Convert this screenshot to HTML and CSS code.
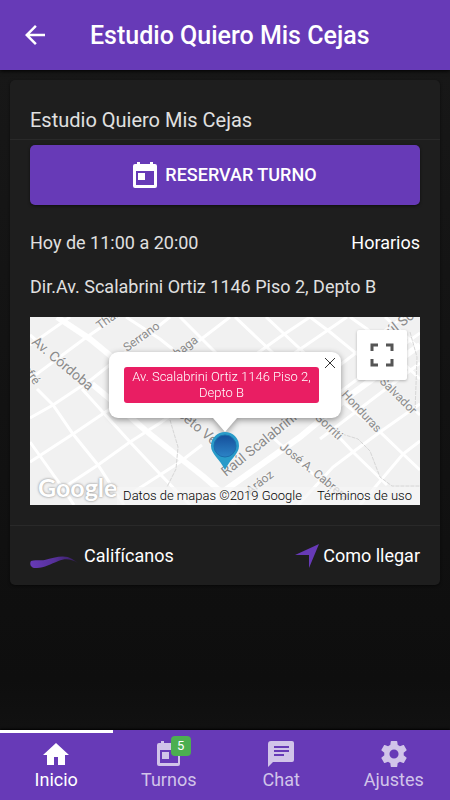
FILE: index.html
```html
<!DOCTYPE html>
<html lang="es">
<head>
<meta charset="utf-8">
<meta name="viewport" content="width=device-width, initial-scale=1">
<title>Estudio Quiero Mis Cejas</title>
<link rel="stylesheet" href="styles.css">
</head>
<body>
<header class="topbar">
  <button class="back" type="button" aria-label="Volver">
    <svg viewBox="0 0 24 24"><path d="M20 11H7.83l5.59-5.59L12 4l-8 8 8 8 1.41-1.41L7.83 13H20z"/></svg>
  </button>
  <h1>Estudio Quiero Mis Cejas</h1>
</header>
<main class="content">
  <article class="card">
    <h2 class="card-title">Estudio Quiero Mis Cejas</h2>
    <div class="card-body">
      <button class="reserve" type="button">
        <svg viewBox="0 0 24 26"><path fill-rule="evenodd" d="M4 0h3v2h10V0h3v2h2a2 2 0 0 1 2 2v20a2 2 0 0 1-2 2H2a2 2 0 0 1-2-2V4a2 2 0 0 1 2-2h2zM3 9v14h18V9zM5 11h7v7H5z"/></svg>
        RESERVAR TURNO
      </button>
      <div class="hours"><span>Hoy de 11:00 a 20:00</span><a href="#horarios">Horarios</a></div>
      <p class="address">Dir.Av. Scalabrini Ortiz 1146 Piso 2, Depto B</p>
      <section class="map" aria-label="Mapa">
        <svg class="map-art" viewBox="0 0 390 188" preserveAspectRatio="xMidYMid slice">
          <rect width="390" height="188" fill="#f1f1f1"/>
          <g class="roads">
            <path d="M0 28L40 0M0 62L54 22L86 0M0 101L23 88L62 62L140 0M0 145L43 117L80 92L200 0M30 173L68 148L100 125L130 106L250 20L280 0M105 174L150 145L172 128M250 46L317 0M310 48L373 0M268 188L303 150L323 135L350 115L390 87M330 188L373 137L390 124M306 78L390 16M290 122L390 46"/>
            <path d="M7 72L23 88L43 117L68 148L94 188M0 125L30 167L44 188M0 18L14 30M52 72L80 103L100 125L130 157L160 188M96 0L130 22L160 46M150 0L190 40M205 0L260 52M280 0L300 15L327 37L390 98M236 0L300 60M320 0L337 12L390 62M310 83L350 115L373 137L390 153M293 103L323 135L357 168M240 118L303 175M355 0L390 32"/>
          </g>
          <g class="avenues"><path d="M27 0L60 22L82 40M62 67L80 82L115 113L130 125L174 160L206 188"/><path d="M180 184L270 120L322 77L390 28"/></g>
          <path class="rail" d="M140 103L148 130L146 152L137 170M312 117L328 122L340 134L350 160L362 169H390M380 15L387 40L385 95"/>
          <g class="streets">
            <text x="70" y="13" transform="rotate(-36 70 13)">Thames</text>
            <text x="97" y="35" transform="rotate(-36 97 35)">Serrano</text>
            <text x="119" y="62" transform="rotate(-37 119 62)">Gurruchaga</text>
            <text class="large" x="1" y="26" transform="rotate(40 1 26)">Av. Córdoba</text>
            <text x="-12" y="46" transform="rotate(54 -12 46)">Jufré</text>
            <text class="large" x="137" y="90" transform="rotate(40 137 90)">Niceto Vega</text>
            <text class="large" x="196" y="160" transform="rotate(-39 196 160)">Raúl Scalabrini</text>
            <text class="large" x="361" y="19" transform="rotate(-38 361 19)">úl Scalabrini</text>
            <text x="220" y="178" transform="rotate(-38 220 178)">Aráoz</text>
            <text x="249" y="131" transform="rotate(39 249 131)">José A. Cabrera</text>
            <text x="284" y="101" transform="rotate(43 284 101)">Gorriti</text>
            <text x="311" y="78" transform="rotate(47 311 78)">Honduras</text>
            <text x="340" y="56" transform="rotate(45 340 56)">El Salvador</text>
          </g>
        </svg>
        <span class="google">Google</span>
        <div class="marker">
          <div class="info">
            <p>Av. Scalabrini Ortiz 1146 Piso 2, Depto B</p>
            <button class="close" type="button" aria-label="Cerrar"><svg viewBox="0 0 12 12"><path d="M1 1l10 10M11 1L1 11"/></svg></button>
          </div>
          <svg class="pin" viewBox="0 0 30 40">
            <defs><linearGradient id="pin-blue" x1="0" y1="0" x2="0" y2="1"><stop stop-color="#154f9b"/><stop offset="1" stop-color="#2c83c6"/></linearGradient></defs>
            <path d="M15 1a14 14 0 0 1 14 14c0 8-9 13-14 24C10 28 1 23 1 15A14 14 0 0 1 15 1z" fill="#299bc9"/>
            <circle cx="15" cy="15" r="11" fill="url(#pin-blue)" stroke="#1c6eac"/>
          </svg>
        </div>
        <button class="fullscreen" type="button" aria-label="Pantalla completa"><svg viewBox="0 0 24 24"><path d="M2 8V2h6M16 2h6v6M22 16v6h-6M8 22H2v-6"/></svg></button>
        <div class="credits"><span>Datos de mapas ©2019 Google</span><a href="#terminos">Términos de uso</a></div>
      </section>
    </div>
    <footer class="card-actions">
      <a class="rate" href="#calificar">
        <svg viewBox="0 0 50 16"><defs><linearGradient id="brow"><stop stop-color="#673ab7"/><stop offset=".5" stop-color="#57319b"/><stop offset="1" stop-color="#321b58"/></linearGradient></defs><path d="M1 6C5 4 10 6 15 5C25 2 36-1 43 4L49 8C42 4 36 3 29 6C21 9 15 13 7 13C1 14-1 9 1 6z" fill="url(#brow)"/></svg>
        Califícanos
      </a>
      <a class="route" href="#como-llegar"><svg viewBox="0 0 26 26"><path d="M25 1L15 25V12L1 12z"/></svg>Como llegar</a>
    </footer>
  </article>
</main>
<nav class="tabs">
  <a class="tab active" href="#inicio"><svg viewBox="0 0 26 26"><path d="M13 2L0 14h4v10h7v-8h4v8h7V14h4z"/></svg>Inicio</a>
  <a class="tab" href="#turnos"><span class="tab-icon"><svg viewBox="0 0 26 26"><path fill-rule="evenodd" d="M5 0h3v2h10V0h3v2h1a2 2 0 0 1 2 2v19a2 2 0 0 1-2 2H3a2 2 0 0 1-2-2V4a2 2 0 0 1 2-2h2zM4 9v13h18V9zM6 11h7v7H6z"/></svg><span class="badge">5</span></span>Turnos</a>
  <a class="tab" href="#chat"><svg viewBox="0 0 26 26"><path fill-rule="evenodd" d="M3 0h21a2 2 0 0 1 2 2v17a2 2 0 0 1-2 2H5l-5 5V3a3 3 0 0 1 3-3zM6 5v2h15V5zm0 4v2h15V9zm0 4v2h10v-2z"/></svg>Chat</a>
  <a class="tab" href="#ajustes"><svg viewBox="2 2 20 20"><path d="M19.43 12.98c.04-.32.07-.64.07-.98s-.03-.66-.07-.98l2.11-1.65c.19-.15.24-.42.12-.64l-2-3.46c-.12-.22-.39-.3-.61-.22l-2.49 1c-.52-.4-1.08-.73-1.69-.98l-.38-2.65C14.46 2.18 14.25 2 14 2h-4c-.25 0-.46.18-.49.42l-.38 2.65c-.61.25-1.17.59-1.69.98l-2.49-1c-.23-.09-.49 0-.61.22l-2 3.46c-.13.22-.07.49.12.64l2.11 1.65c-.04.32-.07.65-.07.98s.03.66.07.98l-2.11 1.65c-.19.15-.24.42-.12.64l2 3.46c.12.22.39.3.61.22l2.49-1c.52.4 1.08.73 1.69.98l.38 2.65c.03.24.24.42.49.42h4c.25 0 .46-.18.49-.42l.38-2.65c.61-.25 1.17-.59 1.69-.98l2.49 1c.23.09.49 0 .61-.22l2-3.46c.12-.22.07-.49-.12-.64zM12 15.5a3.5 3.5 0 1 1 0-7 3.5 3.5 0 0 1 0 7z"/></svg>Ajustes</a>
</nav>
</body>
</html>
```
FILE: styles.css
```css
* { box-sizing: border-box; }
body {
  margin: 0;
  min-height: 100vh;
  display: flex;
  flex-direction: column;
  background: linear-gradient(#181818, #0e0e0e 85%, #161616);
  color: #e0e0e0;
  font: 18px/24px Roboto, sans-serif;
}
h1, h2, p { margin: 0; font-weight: 400; }
a { color: #fff; text-decoration: none; }
button { border: 0; padding: 0; font: inherit; color: #fff; cursor: pointer; }
svg { display: block; fill: currentColor; }

.topbar {
  display: flex;
  align-items: center;
  height: 70px;
  padding: 0 20px;
  gap: 40px;
  background: #673ab7;
  color: #fff;
  box-shadow: 0 1px 4px #000;
}
.back { background: none; }
.back svg { width: 30px; height: 30px; }
.topbar h1 { padding-top: 2px; font-size: 25px; line-height: 32px; font-weight: 500; white-space: nowrap; }

.content { flex: 1; padding: 10px; }
.card { background: #1e1e1e; border-radius: 5px; box-shadow: 0 1px 3px #0008; }
.card-title {
  padding: 25px 20px 4px;
  font-size: 20px;
  line-height: 30px;
  border-bottom: 1px solid #292929;
}
.card-body { padding: 5px 20px 20px; }
.reserve {
  display: flex;
  align-items: center;
  justify-content: center;
  gap: 8px;
  width: 100%;
  height: 60px;
  border-radius: 5px;
  background: #673ab7;
  font-size: 18px;
  font-weight: 500;
  box-shadow: 0 1px 3px #0008;
}
.reserve svg { width: 24px; height: 26px; }
.hours { display: flex; justify-content: space-between; padding-top: 26px; }
.address { padding: 20px 0 18px; }

.map { position: relative; height: 188px; overflow: hidden; color: #222; }
.map-art { width: 100%; height: 100%; }
.roads, .avenues, .rail { fill: none; stroke: #fff; }
.roads { stroke-width: 3px; }
.avenues { stroke-width: 6px; }
.rail { stroke: #d6d6d6; stroke-dasharray: 4 1; }
.streets { fill: #8b8b8b; font-size: 12px; stroke: #f5f5f5; stroke-width: 2px; paint-order: stroke; }
.streets .large { font-size: 14px; }
.google {
  position: absolute;
  left: 8px;
  bottom: 4px;
  color: #fff;
  font: 700 25px/28px Lato, sans-serif;
  text-shadow: 0 0 2px #999, 0 0 3px #bbb;
}
.marker {
  position: absolute;
  top: 35px;
  left: 50%;
  width: 232px;
  transform: translateX(-50%);
}
.info {
  position: relative;
  padding: 15px 22px 15px 15px;
  border-radius: 9px;
  background: #fff;
  filter: drop-shadow(0 2px 3px #0006);
}
.info::after {
  content: "";
  position: absolute;
  top: 100%;
  left: 50%;
  margin-left: -12px;
  border: 12px solid transparent;
  border-top: 14px solid #fff;
  border-bottom: 0;
}
.info p {
  padding: 2px 4px;
  border-radius: 3px;
  background: #e91e63;
  color: #fff;
  font-size: 13px;
  font-weight: 300;
  line-height: 16px;
  text-align: center;
}
.close { position: absolute; top: 5px; right: 5px; background: none; color: #333; }
.close svg { width: 12px; height: 12px; stroke: currentColor; }
.pin { width: 30px; height: 40px; margin: 13px auto 0; position: relative; }
.fullscreen {
  position: absolute;
  top: 13px;
  right: 13px;
  display: grid;
  place-items: center;
  width: 50px;
  height: 50px;
  border-radius: 2px;
  background: #fff;
  color: #555;
  box-shadow: 0 1px 3px #0004;
}
.fullscreen svg { width: 24px; height: 24px; fill: none; stroke: currentColor; stroke-width: 3px; }
.credits {
  position: absolute;
  right: 0;
  bottom: 0;
  display: flex;
  gap: 15px;
  padding: 0 8px 0 6px;
  background: #f5f5f5b3;
  color: #000;
  font-size: 13px;
  font-weight: 300;
  line-height: 18px;
  white-space: nowrap;
}
.credits a { color: inherit; }

.card-actions {
  display: flex;
  justify-content: space-between;
  align-items: center;
  height: 60px;
  padding: 0 20px;
  border-top: 1px solid #292929;
}
.rate, .route { display: flex; align-items: center; }
.rate { gap: 5px; }
.rate svg { width: 49px; height: 16px; margin-top: 14px; }
.route { gap: 3px; }
.route svg { width: 26px; height: 26px; fill: #673ab7; }

.tabs { display: grid; grid-template-columns: repeat(4, 1fr); height: 70px; background: #673ab7; box-shadow: 0 -1px 2px #000; }
.tab {
  display: flex;
  flex-direction: column;
  align-items: center;
  padding-top: 8px;
  gap: 1px;
  border-top: 3px solid transparent;
  color: #d1c4e9;
}
.tab.active { color: #fff; border-color: #fff; }
.tab svg { width: 26px; height: 26px; }
.tab-icon { position: relative; }
.badge {
  position: absolute;
  top: -5px;
  left: 15px;
  width: 20px;
  border-radius: 4px;
  background: #4caf50;
  color: #fff;
  font-size: 13px;
  line-height: 20px;
  text-align: center;
}
```
